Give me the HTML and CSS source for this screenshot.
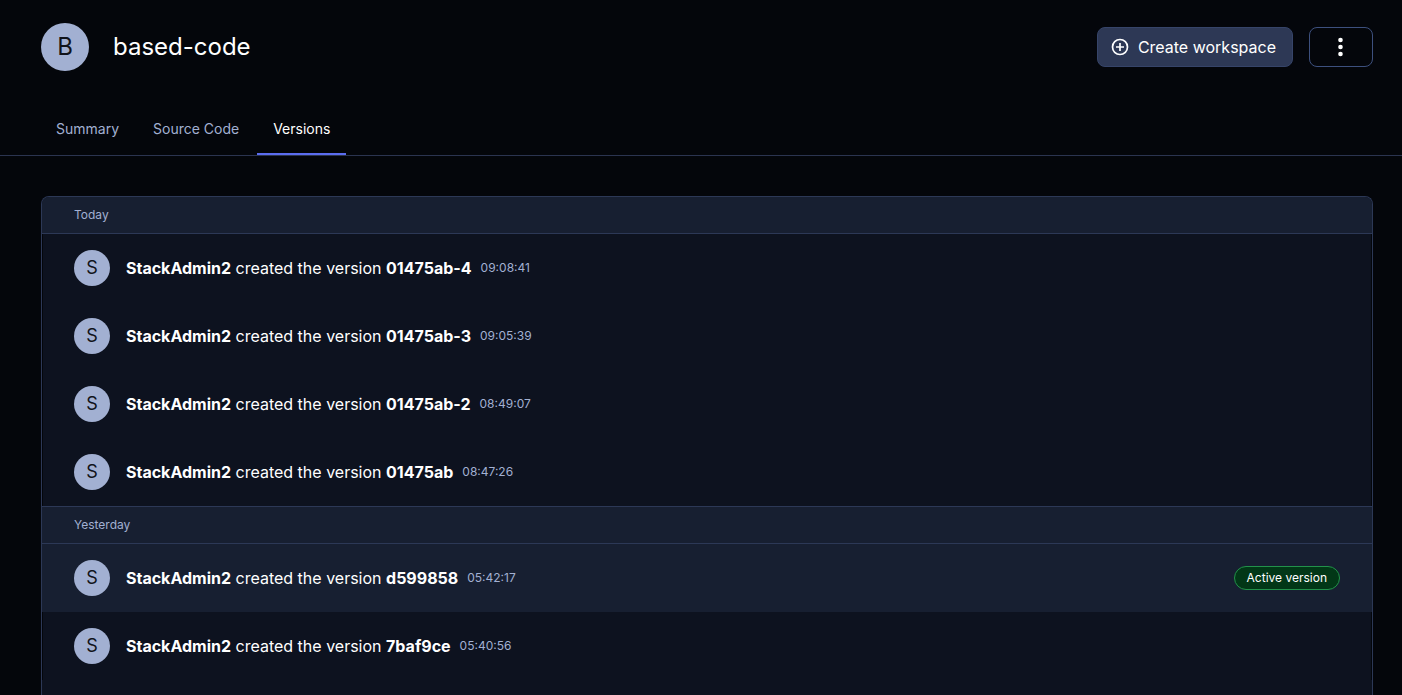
FILE: index.html
```html
<!DOCTYPE html>
<html lang="en">
<head>
	<title>based-code - Versions</title>
	<meta charset="UTF-8">
	<meta name="viewport" content="width=device-width, initial-scale=1">
	<link rel="stylesheet" href="styles.css">
</head>
<body>
	<header class="header">
		<div class="avatar large">B</div>
		<h1>based-code</h1>
		<div class="actions">
			<button type="button" class="btn primary">
				<svg width="18" height="18" viewBox="0 0 18 18" fill="none" stroke="currentColor" stroke-width="1.7">
					<circle cx="9" cy="9" r="7.5"/>
					<path d="M9 5v8M5 9h8"/>
				</svg>
				Create workspace
			</button>
			<button type="button" class="btn more" aria-label="More options">
				<svg width="24" height="24" viewBox="0 0 24 24" fill="currentColor">
					<circle cx="11.5" cy="5" r="2.3"/>
					<circle cx="11.5" cy="12" r="2.3"/>
					<circle cx="11.5" cy="19" r="2.3"/>
				</svg>
			</button>
		</div>
	</header>

	<nav class="tabs">
		<a href="#">Summary</a>
		<a href="#">Source Code</a>
		<a href="#" class="active">Versions</a>
	</nav>

	<main class="versions">
		<h2>Today</h2>
		<ul>
			<li>
				<div class="avatar">S</div>
				<p><strong>StackAdmin2</strong> created the version <strong>01475ab-4</strong></p>
				<time>09:08:41</time>
			</li>
			<li>
				<div class="avatar">S</div>
				<p><strong>StackAdmin2</strong> created the version <strong>01475ab-3</strong></p>
				<time>09:05:39</time>
			</li>
			<li>
				<div class="avatar">S</div>
				<p><strong>StackAdmin2</strong> created the version <strong>01475ab-2</strong></p>
				<time>08:49:07</time>
			</li>
			<li>
				<div class="avatar">S</div>
				<p><strong>StackAdmin2</strong> created the version <strong>01475ab</strong></p>
				<time>08:47:26</time>
			</li>
		</ul>
		<h2>Yesterday</h2>
		<ul>
			<li class="current">
				<div class="avatar">S</div>
				<p><strong>StackAdmin2</strong> created the version <strong>d599858</strong></p>
				<time>05:42:17</time>
				<span class="badge">Active version</span>
			</li>
			<li>
				<div class="avatar">S</div>
				<p><strong>StackAdmin2</strong> created the version <strong>7baf9ce</strong></p>
				<time>05:40:56</time>
			</li>
		</ul>
	</main>
</body>
</html>
```
FILE: styles.css
```css
*{
	margin: 0;
	padding: 0;
	box-sizing: border-box;
}
body{
	min-height: 100vh;
	display: flex;
	flex-direction: column;
	background: #04060b;
	color: #fff;
	font: 16px/24px Inter, "Liberation Sans", sans-serif;
}
a{
	text-decoration: none;
}
ul{
	list-style: none;
}
.header{
	display: flex;
	align-items: center;
	gap: 24px;
	padding: 23px 29px 32px 41px;
}
.header h1{
	font-size: 24px;
	font-weight: 400;
	line-height: 36px;
}
.avatar{
	width: 36px;
	height: 36px;
	flex: none;
	border-radius: 50%;
	background: #a2b0d2;
	color: #11131a;
	font-size: 18px;
	line-height: 36px;
	text-align: center;
}
.avatar.large{
	width: 48px;
	height: 48px;
	font-size: 24px;
	line-height: 48px;
}
.actions{
	display: flex;
	gap: 16px;
	margin-left: auto;
}
.btn{
	height: 40px;
	display: flex;
	align-items: center;
	justify-content: center;
	gap: 9px;
	border: 1px solid #3d507e;
	border-radius: 8px;
	background: none;
	color: #fff;
	font: inherit;
	cursor: pointer;
}
.btn.primary{
	padding: 0 16px 0 13px;
	background: #2d3855;
	border-color: #364469;
}
.btn.more{
	width: 64px;
}
.tabs{
	display: flex;
	gap: 2px;
	padding-left: 40px;
	border-bottom: 1px solid #2b3450;
}
.tabs a{
	height: 52px;
	padding: 16px 16px 0;
	color: #a2b0d2;
	font-size: 14px;
	line-height: 20px;
}
.tabs .active{
	border-bottom: 2px solid #5b6df0;
	color: #fff;
}
.versions{
	flex: 1;
	margin: 40px 29px 0 41px;
	border: 1px solid #2c3856;
	border-bottom: 0;
	border-radius: 8px 8px 0 0;
	background: #0d121f;
	overflow: hidden;
}
.versions h2{
	padding: 8px 32px;
	border-bottom: 1px solid #2c3856;
	background: #171f31;
	color: #a2b0d2;
	font-size: 12px;
	font-weight: 400;
	line-height: 20px;
}
.versions ul + h2{
	border-top: 1px solid #2c3856;
}
.versions li{
	display: flex;
	align-items: center;
	padding: 16px 31px;
	border: solid #04060b;
	border-width: 0 1px;
}
.versions li.current{
	background: #171f31;
	border-color: #171f31;
}
.versions p{
	margin: 0 9px 0 16px;
}
.versions time{
	color: #a2b0d2;
	font-size: 12px;
}
.badge{
	margin-left: auto;
	padding: 0 12px;
	border: 1px solid #22924a;
	border-radius: 12px;
	background: #023717;
	font-size: 12px;
	line-height: 22px;
}
```
